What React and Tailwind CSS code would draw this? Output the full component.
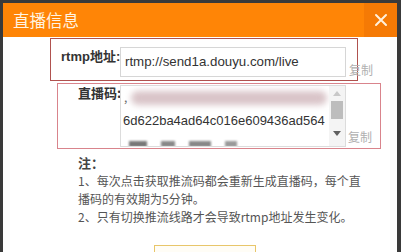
import React from "react";

export default function App() {
  const cjk = { fontFamily: '"Noto Sans CJK SC", "Noto Sans", sans-serif' };
  const mixed = { fontFamily: '"Liberation Sans", "Noto Sans CJK SC", sans-serif' };
  return (
    <div className="w-[401px] h-[252px] bg-[#3a3a3a] pt-[3px] pl-[3px] pr-[4px] overflow-hidden" style={cjk}>
      <div className="w-full h-[249px] bg-white flex flex-col overflow-hidden">
        <div className="h-[34px] shrink-0 bg-[#ff8506] flex items-stretch">
          <div className="flex-1 flex items-center pl-[10px] text-[16.5px] text-[#fff4e2] leading-none">直播信息</div>
          <div className="w-[33px] bg-[#f57a05] flex items-center justify-center">
            <svg width="14" height="14" viewBox="0 0 14 14">
              <path d="M2 2 L12 12 M12 2 L2 12" stroke="#fff0dc" strokeWidth="2" strokeLinecap="round" />
            </svg>
          </div>
        </div>
        <div className="flex flex-col pl-[47px] shrink-0">
          <div className="mt-[1px] shrink-0 w-[308px] h-[43px] border border-[#b0524f] flex items-start">
            <div className="w-[69px] pl-[10px] pt-[8px] text-[13px] font-bold text-[#333] whitespace-nowrap" style={mixed}>rtmp地址:</div>
            <div className="relative mt-[8px]">
              <div className="w-[226px] h-[30px] border border-[#d6d6d6] flex items-center pl-[4px] text-[13.3px] text-[#333]" style={mixed}>rtmp://send1a.douyu.com/live</div>
              <div className="absolute left-[229px] top-[14px] w-[30px] text-[12px] text-[#b0b0b0] whitespace-nowrap">复制</div>
            </div>
          </div>
          <div className="mt-[2px] shrink-0 ml-[7px] w-[324px] h-[66px] border border-[#d9848c] flex">
            <div className="w-[62px] pl-[20px] pt-[2px] text-[13px] leading-[13px] font-semibold text-[#333] whitespace-nowrap">直播码:</div>
            <div className="relative mt-[1px] w-[226px] h-[62px] border border-[#dcdcdc] overflow-hidden">
              <div className="absolute left-[3px] top-[5px] text-[12px] text-[#666] leading-none">,</div>
              <div className="absolute left-[10px] top-[5px] w-[196px] h-[14px] rounded-full bg-[#d9c4c8] blur-[3px]" />
              <div className="absolute left-[2px] top-[28px] text-[13px] text-[#333] leading-none whitespace-nowrap" style={mixed}>6d622ba4ad64c016e609436ad564</div>
              <div className="absolute left-[8px] top-[55px] flex gap-[14px] blur-[1px]">
                <span className="w-[18px] h-[6px] bg-[#777]" />
                <span className="w-[14px] h-[6px] bg-[#888]" />
                <span className="w-[22px] h-[6px] bg-[#888]" />
                <span className="w-[12px] h-[6px] bg-[#999]" />
              </div>
              <div className="absolute right-0 top-0 w-[16px] h-full bg-[#f4f4f4] flex flex-col items-center">
                <svg width="8" height="5" viewBox="0 0 8 5" className="mt-[5px]"><path d="M0 5 L4 0 L8 5 Z" fill="#c8c8c8" /></svg>
                <div className="mt-[5px] w-[12px] h-[18px] bg-[#bdbdbd]" />
                <svg width="8" height="5" viewBox="0 0 8 5" className="mt-[12px]"><path d="M0 0 L8 0 L4 5 Z" fill="#606060" /></svg>
              </div>
            </div>
            <div className="self-end mb-[2px] ml-[2px] text-[12px] text-[#b0b0b0] whitespace-nowrap">复制</div>
          </div>
          <div className="ml-[28px] mt-[5px] text-[12px] leading-[18px] text-[#555] whitespace-nowrap">
            <div className="font-semibold text-[13px] text-[#444]">注：</div>
            <div>1、每次点击获取推流码都会重新生成直播码，每个直</div>
            <div>播码的有效期为5分钟。</div>
            <div>2、只有切换推流线路才会导致rtmp地址发生变化。</div>
          </div>
          <div className="ml-[104px] mt-[19px] w-[102px] h-[20px] shrink-0 border border-[#e8c66a] bg-[#fffdf6]" />
        </div>
      </div>
    </div>
  );
}
